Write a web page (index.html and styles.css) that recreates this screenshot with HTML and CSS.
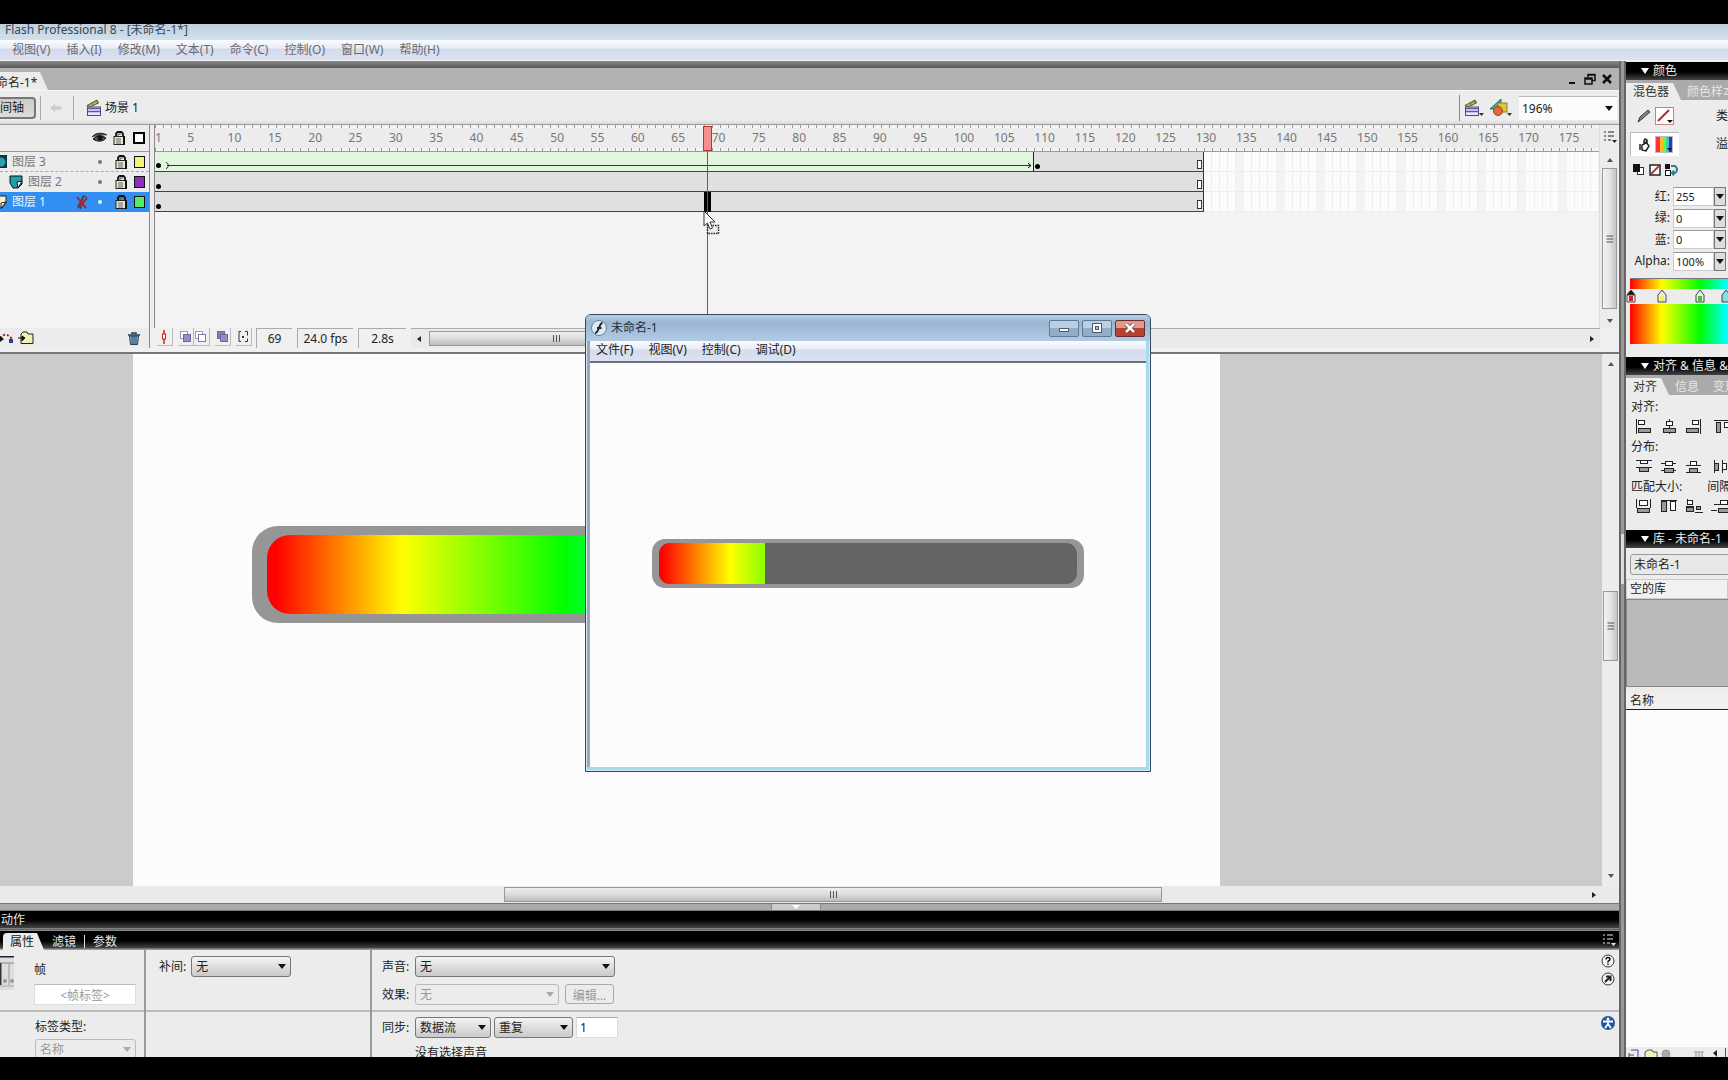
FILE: index.html
```html
<!DOCTYPE html>
<html lang="zh-CN">
<head>
<meta charset="utf-8">
<title>Flash Professional 8 - [未命名-1*]</title>
<link rel="stylesheet" href="styles.css">
</head>
<body>
<svg class="defs" aria-hidden="true">
  <symbol id="lock" viewBox="0 0 12 14"><path d="M3 6V2.500l1.500-1.500h4L10 2.500V6" fill="none" stroke="#111" stroke-width="1.800"/><path d="M5 5V3h3" fill="none" stroke="#555"/><rect x="1" y="5.500" width="9.500" height="8" fill="#e8e8d0" stroke="#222"/><path d="M11 5v9" stroke="#111" stroke-width="2"/><path d="M3 8h5M3 10h5M3 12h5" stroke="#666"/></symbol>
  <symbol id="clapper" viewBox="0 0 16 16"><path d="M1 5.500L11 0l1.500 3L3 7.500z" fill="#9c9c3c" stroke="#5a5a20"/><path d="M4 4.500l2 2M8 2.500l2 2" stroke="#dede8a"/><rect x="1.500" y="7" width="13" height="8.500" fill="#e6e6fa" stroke="#4a4a92"/><path d="M2 8.500h12M2 11.500h12" stroke="#5a5aa4" stroke-width="1.500"/></symbol>
  <symbol id="menu" viewBox="0 0 14 14"><path d="M1 2h2M1 6h2M1 10h2M5 2h6M5 6h6M5 10h3" stroke="currentColor"/><path d="M9 10h5l-2.500 3z" fill="currentColor"/></symbol>
  <symbol id="grip" viewBox="0 0 9 8"><path d="M1.500 0v7M4.500 0v7M7.500 0v7" stroke="#555"/></symbol>
</svg>
<div class="band band-top"></div>
<header>
  <div class="titlebar">Flash Professional 8 - [未命名-1*]</div>
  <nav class="menubar"><a href="#">视图(V)</a><a href="#">插入(I)</a><a href="#">修改(M)</a><a href="#">文本(T)</a><a href="#">命令(C)</a><a href="#">控制(O)</a><a href="#">窗口(W)</a><a href="#">帮助(H)</a></nav>
</header>
<div class="workspace">
  <main class="main">
    <section class="doc">
      <div class="doctabs">
        <a class="doctab" href="#">命名-1*</a>
        <div class="winbtns">
          <button aria-label="最小化"><svg viewBox="0 0 12 12"><path d="M2 10h6" stroke="#111" stroke-width="2"/></svg></button>
          <button aria-label="还原"><svg viewBox="0 0 12 12"><path d="M4 4V1.500h7v6H8.500M1 5h7v6H1zM1 6h7M4 2h7" fill="none" stroke="#111" stroke-width="1.500"/></svg></button>
          <button aria-label="关闭"><svg viewBox="0 0 12 12"><path d="M2 2l8 8M10 2l-8 8" stroke="#111" stroke-width="2.500"/></svg></button>
        </div>
      </div>
      <div class="editbar">
        <button class="tlbtn">间轴</button>
        <i class="sep"></i>
        <button class="back" aria-label="返回"><svg width="14" height="12" viewBox="0 0 16 12"><path d="M1 6l6-5v3h7v4H7v3z" fill="#ccc"/></svg></button>
        <i class="sep"></i>
        <span class="scene"><svg width="16" height="18"><use href="#clapper"/></svg>场景 1</span>
        <div class="edittools">
          <button aria-label="编辑场景"><svg width="20" height="18" viewBox="0 0 20 18"><use href="#clapper" width="16" height="18"/><path d="M15 14h5l-2.500 3z" fill="#333"/></svg></button>
          <button aria-label="编辑元件"><svg width="23" height="18" viewBox="0 0 23 18"><path d="M0 10L11 0v10z" fill="#3fae8c" stroke="#23705a"/><rect x="8" y="4" width="9" height="9" fill="#e0c63c" stroke="#96801e"/><circle cx="8" cy="12" r="4.500" fill="#e2693a" stroke="#a3401c"/><path d="M17 14h5l-2.500 3z" fill="#333"/></svg></button>
          <span class="combo zoom"><select aria-label="缩放"><option>196%</option></select></span>
        </div>
      </div>
      <div class="timeline">
        <div class="layers">
          <div class="lhead">
            <svg width="15" height="11" viewBox="0 0 15 11"><path d="M0 5C3 1 9 0 15 3M1 7c4-4 9-4 13-1-3 4-9 4-13 1z" fill="#555" stroke="#111"/><circle cx="8" cy="6" r="2.500" fill="#111"/></svg>
            <svg class="lk" width="12" height="14"><use href="#lock"/></svg>
            <b class="chip outline"></b>
          </div>
          <div class="layer masked">
            <svg width="12" height="14" viewBox="0 0 12 14"><rect width="7" height="13" fill="#063a42"/><circle cx="1" cy="7" r="4.500" fill="#29a0ac"/></svg>
            <span class="lname">图层 3</span><i class="dot"></i><svg class="lk" width="12" height="14"><use href="#lock"/></svg><b class="chip yellow"></b>
          </div>
          <div class="layer sub">
            <svg width="14" height="14" viewBox="0 0 14 14"><path d="M1 1h12v8l-4 4H4L1 8z" fill="#21a0ac" stroke="#111"/><path d="M13 6l-5 1 1 6z" fill="#fff" stroke="#111"/></svg>
            <span class="lname">图层 2</span><i class="dot"></i><svg class="lk" width="12" height="14"><use href="#lock"/></svg><b class="chip purple"></b>
          </div>
          <div class="layer selected">
            <svg width="12" height="14" viewBox="0 0 12 14"><path d="M0 1h6v7l-4 5H0" fill="#f5f0d4" stroke="#222"/><path d="M6 7L1 8v5z" fill="#fff" stroke="#222"/></svg>
            <span class="lname">图层 1</span>
            <svg class="noedit" width="12" height="14" viewBox="0 0 12 14"><path d="M9 1L3 13" stroke="#3c3c50" stroke-width="4"/><path d="M9 2L4 12" stroke="#c8b070"/><path d="M1 2l9 11M11 3L2 13" stroke="#a3293c" stroke-width="2"/></svg>
            <i class="dot"></i><svg class="lk" width="12" height="14"><use href="#lock"/></svg><b class="chip green"></b>
          </div>
        </div>
        <div class="gutter"></div>
        <div class="frames">
          <div class="ruler" id="ruler"><span>1</span><span>5</span><span>10</span><span>15</span><span>20</span><span>25</span><span>30</span><span>35</span><span>40</span><span>45</span><span>50</span><span>55</span><span>60</span><span>65</span><span>70</span><span>75</span><span>80</span><span>85</span><span>90</span><span>95</span><span>100</span><span>105</span><span>110</span><span>115</span><span>120</span><span>125</span><span>130</span><span>135</span><span>140</span><span>145</span><span>150</span><span>155</span><span>160</span><span>165</span><span>170</span><span>175</span></div>
          <div class="frow tweened">
            <div class="tween"><i class="key"></i><svg width="4" height="7" viewBox="0 0 4 7"><path d="M0 0l3 3.500-3 3.500" fill="none" stroke="#333"/></svg><i class="shaft"></i><svg class="tip" width="4" height="7" viewBox="0 0 4 7"><path d="M0 1l3 2.500-3 2.500" fill="none" stroke="#111"/></svg></div>
            <div class="span"><i class="key"></i><i class="endmark"></i></div><div class="empty"></div>
          </div>
          <div class="frow"><div class="span"><i class="key"></i><i class="endmark"></i></div><div class="empty"></div></div>
          <div class="frow"><div class="span"><i class="key"></i><i class="endmark"></i></div><div class="empty"></div></div>
          <div class="selframe"></div>
          <div class="playhead"></div>
          <svg class="cursor" width="18" height="26" viewBox="0 0 18 26"><rect x="4.500" y="15.500" width="11" height="8" fill="#eee" stroke="#222" stroke-width="1.500" stroke-dasharray="1.500 1"/><path d="M1 1v15l3.500-3 2.500 6 2.500-1-2.500-6h5z" fill="#fff" stroke="#333"/></svg>
        </div>
        <div class="vscroll tlscroll">
          <svg class="menuicon" width="14" height="14"><use href="#menu"/></svg>
          <i class="up"></i><div class="thumb"><svg width="9" height="8"><use href="#grip"/></svg></div><i class="down"></i>
        </div>
      </div>
      <div class="status">
        <div class="layertools">
          <button aria-label="运动引导层"><svg width="14" height="14" viewBox="0 0 14 14"><path d="M0 7q6-7 12 1" fill="none" stroke="#a22" stroke-width="2" stroke-dasharray="2 2"/><path d="M0 5l4 3-4 3z" fill="#111"/><rect x="9" y="8" width="4" height="4" fill="#2b3f9c"/></svg></button>
          <button aria-label="新建文件夹"><svg width="16" height="14" viewBox="0 0 16 14"><path d="M3 12.500V3l2-2h4l1 2h5v9.500z" fill="#f0f0b0" stroke="#222"/><path d="M0 7h6M4 5l3 2-3 3z" fill="#111" stroke="#111"/></svg></button>
          <button class="trash" aria-label="删除图层"><svg width="12" height="13" viewBox="0 0 12 13"><path d="M0 3h12M4 2V1h4v1" fill="none" stroke="#1d405e" stroke-width="1.500"/><path d="M1.500 4h9l-1 8.500h-7zM4 4v8M6 4v8M8 4v8" fill="#9cc0d8" stroke="#1d405e"/></svg></button>
        </div>
        <div class="onion">
          <button aria-label="帧居中"><svg width="14" height="14" viewBox="0 0 14 14"><path d="M7 0v14" stroke="#c22" stroke-width="1.500"/><rect x="5.500" y="4" width="3" height="5" fill="#fff" stroke="#c22"/></svg></button>
          <button class="gapl" aria-label="绘图纸外观"><svg width="14" height="14" viewBox="0 0 14 14"><rect x="2.500" y="1.500" width="7" height="7" fill="#fff" stroke="#9999c0"/><rect x="5.500" y="4.500" width="7" height="7" fill="#8f8fc0" stroke="#6a6a9c"/></svg></button>
          <button aria-label="绘图纸外观轮廓"><svg width="14" height="14" viewBox="0 0 14 14"><rect x="1.500" y="1.500" width="7" height="7" fill="#fff" stroke="#9999c0"/><rect x="4.500" y="4.500" width="7" height="7" fill="#fff" stroke="#7a7aac"/></svg></button>
          <button class="gapl" aria-label="编辑多个帧"><svg width="14" height="14" viewBox="0 0 14 14"><rect x="2.500" y="1.500" width="7" height="7" fill="#8080b4" stroke="#6a6a9c"/><rect x="5.500" y="4.500" width="7" height="7" fill="#8f8fc0" stroke="#6a6a9c"/></svg></button>
          <button class="gapl" aria-label="修改绘图纸标记"><svg width="14" height="14" viewBox="0 0 14 14"><path d="M5 1.500H3v10h2M9 1.500h2.500v4M9 11.500h2.500v-3" fill="none" stroke="#333"/><rect x="6" y="6" width="2" height="2" fill="#333"/></svg></button>
        </div>
        <output class="w36">69</output><output class="w56">24.0 fps</output><output class="w48">2.8s</output>
        <div class="hscroll"><i class="left"></i><div class="thumb"><svg width="9" height="8"><use href="#grip"/></svg></div><i class="right"></i></div>
      </div>
    </section>
    <section class="stagearea">
      <div class="pasteboard"><div class="canvas"><div class="bar"><div class="fill"></div></div></div></div>
      <div class="vscroll stagev"><i class="up"></i><div class="thumb"><svg width="9" height="8"><use href="#grip"/></svg></div><i class="down"></i></div>
      <div class="hscroll stageh"><div class="thumb"><svg width="9" height="8"><use href="#grip"/></svg></div><i class="right"></i></div>
    </section>
    <div class="splitter"><button aria-label="折叠面板"></button></div>
    <div class="panelbar">动作</div>
    <div class="panelbar tabs"><a class="on" href="#">属性</a><a href="#">滤镜</a><i></i><a href="#">参数</a><svg width="14" height="14"><use href="#menu"/></svg></div>
    <section class="props">
      <div class="pcol frameinfo">
        <div class="top">
          <svg class="frameicon" width="14" height="34" viewBox="0 0 14 34"><rect width="14" height="34" fill="#ddd"/><path d="M0 .5h14" stroke="#223" stroke-width="2"/><path d="M0 7h14" stroke="#888"/><path d="M.5 7v22" stroke="#333" stroke-width="2"/><path d="M9 7v22" stroke="#999"/><circle cx="5" cy="25" r="2" fill="#999"/><circle cx="12" cy="25" r="2" fill="#999"/><path d="M0 30h14" stroke="#aaa"/></svg>
          <label for="flabel">帧</label><input id="flabel" value="&lt;帧标签&gt;" disabled>
        </div>
        <div class="bottom"><label for="ltype">标签类型:</label><span class="combo off"><select id="ltype" disabled><option>名称</option></select></span></div>
      </div>
      <div class="pcol tweencol"><div class="top"><label for="tw">补间:</label><span class="combo w100"><select id="tw"><option>无</option></select></span></div><div class="bottom"></div></div>
      <div class="pcol soundcol">
        <div class="top">
          <div class="prow"><label for="snd">声音:</label><span class="combo w200"><select id="snd"><option>无</option></select></span></div>
          <div class="prow"><label for="eff">效果:</label><span class="combo off w144"><select id="eff" disabled><option>无</option></select></span><button class="edit" disabled>编辑...</button></div>
          <div class="help">
            <svg width="14" height="14" viewBox="0 0 14 14"><circle cx="7" cy="7" r="6" fill="#f6f6f6" stroke="#333"/><path d="M5 5.500q0-2 2-2t2 1.800q0 1-2 2V8.500M7 9.500v1.500" fill="none" stroke="#111" stroke-width="1.500"/></svg>
            <svg width="14" height="14" viewBox="0 0 14 14"><circle cx="7" cy="7" r="6" fill="#f6f6f6" stroke="#333"/><path d="M4 10l5-5M5 4.500h4.500V9" fill="none" stroke="#222" stroke-width="2"/></svg>
          </div>
        </div>
        <div class="bottom">
          <div class="prow"><label for="sync">同步:</label><span class="combo w76"><select id="sync"><option>数据流</option></select></span><span class="combo w80"><select aria-label="重复方式"><option>重复</option></select></span><input class="times" aria-label="次数" value="1"></div>
          <div class="nosound">没有选择声音</div>
          <div class="help"><svg width="14" height="14" viewBox="0 0 14 14"><circle cx="7" cy="7" r="7" fill="#1f56a0"/><circle cx="7" cy="3" r="1.500" fill="#fff"/><path d="M2 5.500h10M7 5v3l-3 4M7 8l3 4" fill="none" stroke="#fff" stroke-width="1.800"/></svg></div>
        </div>
      </div>
    </section>
    <section class="player">
      <div class="ptitle">
        <svg width="16" height="16" viewBox="0 0 16 16"><circle cx="8" cy="8" r="7.500" fill="#dfe9f2" stroke="#6b8196"/><path d="M11.500 3C8 3 8 13 4 13M6 8h4.500" fill="none" stroke="#14283c" stroke-width="2"/></svg>
        <span>未命名-1</span>
        <button aria-label="最小化"><svg width="12" height="10" viewBox="0 0 12 10"><rect x="1.500" y="5.500" width="9" height="3" fill="#fff" stroke="#4b5c70"/></svg></button>
        <button aria-label="最大化"><svg width="12" height="10" viewBox="0 0 12 10"><rect x="1.500" y=".5" width="9" height="9" fill="#fff" stroke="#4b5c70"/><rect x="4.500" y="3.500" width="3" height="3" fill="#a9c0da" stroke="#4b5c70"/></svg></button>
        <button class="close" aria-label="关闭"><svg width="12" height="10" viewBox="0 0 12 10"><path d="M2 1l8 8M10 1L2 9" stroke="#6e3434" stroke-width="4"/><path d="M2 1l8 8M10 1L2 9" stroke="#fff" stroke-width="2.500"/></svg></button>
      </div>
      <nav class="pmenu"><a href="#">文件(F)</a><a href="#">视图(V)</a><a href="#">控制(C)</a><a href="#">调试(D)</a></nav>
      <div class="pview"><div class="pbar"><div class="ptrack"><div class="pfill"></div></div></div></div>
    </section>
  </main>
  <div class="divider"><button aria-label="折叠面板"></button></div>
  <aside class="dock">
    <h2>颜色</h2>
    <div class="dtabs"><a class="on" href="#">混色器</a><a href="#">颜色样本</a></div>
    <section class="mixer">
      <div class="mrow"><button class="tool" aria-label="笔触颜色"><svg width="16" height="16" viewBox="0 0 16 16"><path d="M2 14l2-5 8-7 2 2-8 7z" fill="#888" stroke="#333"/></svg></button><button class="sw" aria-label="笔触"><svg width="20" height="18" viewBox="0 0 20 18"><rect x=".5" y=".5" width="18" height="17" fill="#fff" stroke="#d08080"/><path d="M3 14L14 3" stroke="#b02838" stroke-width="2"/><path d="M12 13h6l-3 3z" fill="#111"/></svg></button><span class="mlabel">类型:</span></div>
      <div class="mrow"><span class="active"><button class="tool" aria-label="填充颜色"><svg width="14" height="16" viewBox="0 0 14 16"><path d="M4 8l4-3 3 4-3 5-4-1zM6 8V4l1-2 2 1v3M2 7v6" fill="none" stroke="#222" stroke-width="1.500"/></svg></button><button class="sw rainbow" aria-label="填充"><svg width="16" height="15" viewBox="0 0 16 15"><path d="M11 11h5l-2.500 3z" fill="#111"/></svg></button></span><span class="mlabel">溢出:</span></div>
      <div class="mrow small">
        <svg width="12" height="14" viewBox="0 0 12 14"><rect x="4.500" y="4.500" width="6" height="7" fill="#fff" stroke="#333"/><rect y="1" width="7" height="8" fill="#111"/></svg>
        <svg width="12" height="14" viewBox="0 0 12 14"><rect x="1" y="2" width="10" height="10" fill="#fff" stroke="#222" stroke-width="1.500"/><path d="M2 11l8-8" stroke="#b33" stroke-width="2"/></svg>
        <svg width="14" height="14" viewBox="0 0 14 14"><rect y="1" width="5" height="5" fill="#111"/><rect x=".5" y="7.500" width="5" height="5" fill="#fff" stroke="#111"/><path d="M6 3h4q4 4 0 7H7M9 7.500L7 10l2 2.500" fill="none" stroke="#317a90" stroke-width="2"/></svg>
      </div>
      <div class="num"><label for="r">红:</label><input id="r" value="255"><button aria-label="调整红"></button></div>
      <div class="num"><label for="g">绿:</label><input id="g" value="0"><button aria-label="调整绿"></button></div>
      <div class="num"><label for="b">蓝:</label><input id="b" value="0"><button aria-label="调整蓝"></button></div>
      <div class="num"><label for="a">Alpha:</label><input id="a" value="100%"><button aria-label="调整透明度"></button></div>
      <div class="strip"></div>
      <svg class="stops" width="104" height="16" viewBox="0 0 104 16"><g stroke="#444"><path d="M1 6l4-5 4 5v7H1z" fill="#eee"/><path d="M1 6l4-5 4 5z" fill="#111"/><path d="M3 7h4v5H3z" fill="#c22" stroke="none"/><path d="M32 6l4-5 4 5v7h-8z" fill="#eee"/><path d="M34 7h4v5h-4z" fill="#f0f05a" stroke="none"/><path d="M70 6l4-5 4 5v7h-8z" fill="#eee"/><path d="M72 7h4v5h-4z" fill="#3c3" stroke="none"/><path d="M96 6l4-5 4 5v7h-8z" fill="#7fe0e8"/></g></svg>
      <div class="strip big"></div>
    </section>
    <h2>对齐 &amp; 信息 &amp; 变形</h2>
    <div class="dtabs"><a class="on" href="#">对齐</a><a href="#">信息</a><i></i><a href="#">变形</a></div>
    <section class="align">
      <p>对齐:</p>
      <svg width="100" height="16" viewBox="0 0 100 16" fill="#999" stroke="#222"><path d="M1.500 0v15"/><rect x="3.500" y="1.500" width="6" height="4" fill="#fff"/><rect x="3.500" y="9.500" width="12" height="4"/><path d="M34.500 0v15"/><rect x="31.500" y="2.500" width="6" height="4" fill="#fff"/><rect x="28.500" y="9.500" width="12" height="4"/><path d="M65.500 0v15"/><rect x="57.500" y="1.500" width="6" height="4" fill="#fff"/><rect x="51.500" y="9.500" width="12" height="4"/><path d="M79 1.500h20"/><rect x="81.500" y="3.500" width="4" height="10"/><rect x="89.500" y="3.500" width="4" height="5" fill="#fff"/></svg>
      <p>分布:</p>
      <svg width="100" height="16" viewBox="0 0 100 16" fill="#999" stroke="#222"><path d="M1 1.500h16M1 8.500h16M26 4.500h15M26 11.500h15M51 6.500h15M51 13.500h15M79.500 1v13M87.500 1v13"/><rect x="5.500" y="1.500" width="7" height="3" fill="#fff"/><rect x="4.500" y="8.500" width="9" height="4"/><rect x="30.500" y="2.500" width="7" height="4" fill="#fff"/><rect x="29.500" y="9.500" width="9" height="4"/><rect x="55.500" y="2.500" width="6" height="4" fill="#fff"/><rect x="54.500" y="9.500" width="8" height="4"/><rect x="79.500" y="4.500" width="4" height="7"/><rect x="87.500" y="4.500" width="4" height="6" fill="#fff"/></svg>
      <p class="two"><span>匹配大小:</span><span>间隔:</span></p>
      <svg width="100" height="16" viewBox="0 0 100 16" fill="#999" stroke="#222"><path d="M1.500 0v9M15.500 0v9M26 1.500h16M51 7.500h8M60 13.500h8M52.500 0v6M79 5.500h6M76 11.500h6"/><rect x="4.500" y="1.500" width="8" height="5" fill="#fff"/><rect x="2.500" y="9.500" width="12" height="4"/><rect x="26.500" y="2.500" width="5" height="10"/><rect x="35.500" y="2.500" width="5" height="9" fill="#fff"/><rect x="52.500" y="1.500" width="5" height="4" fill="#fff"/><rect x="51.500" y="8.500" width="7" height="4"/><rect x="61.500" y="7.500" width="4" height="3"/><rect x="85.500" y="1.500" width="7" height="4" fill="#fff"/><rect x="83.500" y="9.500" width="10" height="4"/></svg>
    </section>
    <h2>库 - 未命名-1</h2>
    <section class="library">
      <select aria-label="库文档"><option>未命名-1</option></select>
      <div class="libinfo">空的库</div>
      <div class="preview"></div>
      <div class="libhead">名称</div>
      <div class="liblist"></div>
      <div class="libfoot"><svg width="102" height="10" viewBox="0 0 102 10" fill="none" stroke="#555"><path d="M5 3h7v7M3 8h5M3 6v4" stroke="#449"/><path d="M19 10V5l3-2h4l1 2h4v5" fill="#f3f0bd"/><circle cx="40" cy="7" r="4" fill="#aaa" stroke="#999"/><path d="M68 5h10M70 6v4M73 6v4M76 6v4" stroke="#888"/><path d="M91 3v7l-4-4z" fill="#222" stroke="none"/><path d="M99.500 1v9"/></svg></div>
    </section>
  </aside>
</div>
<div class="band band-bottom"></div>
</body>
</html>
```

FILE: styles.css
```css
* { box-sizing: border-box; }
body {
  margin: 0;
  min-height: 100vh;
  display: flex;
  flex-direction: column;
  background: #000;
  font: 12px/16px "Noto Sans", "Noto Sans CJK SC", sans-serif;
  color: #222;
  overflow-x: hidden;
}
a { color: inherit; text-decoration: none; }
button, input, select { font: inherit; color: inherit; margin: 0; padding: 0; }
button { border: 0; background: none; }
svg { display: block; flex: none; }
p, h2 { margin: 0; }
.defs { position: absolute; width: 0; height: 0; }
.band-top { height: 24px; }
.band-bottom { height: 23px; }

/* Application title and menu */
.titlebar { height: 16px; line-height: 11px; padding-left: 5px; background: linear-gradient(#bdcfdd, #d2e1ed); color: #3c4650; overflow: hidden; }
.menubar { display: flex; gap: 16px; height: 21px; padding: 2px 12px; background: linear-gradient(#fafbfe, #e9edf7 40%, #d3dbec 45%, #dce2f2); border-bottom: 1px solid #f2f2f2; color: #6a6a70; }

.workspace { flex: 1; display: flex; background: #999; }
.main { position: relative; flex: 1; min-width: 0; display: flex; flex-direction: column; background: #ececec; }

/* Document window */
.doc { border-bottom: 2px solid #777; }
.doctabs { display: flex; justify-content: space-between; height: 29px; padding-top: 7px; background: linear-gradient(#8a8a8a, #555 7px, #b2b2b2 7px); }
.doctab { align-self: flex-end; width: 48px; height: 18px; line-height: 21px; text-indent: -4px; background: #ececec; clip-path: polygon(0 0, 40px 0, 48px 100%, 0 100%); overflow: hidden; }
.winbtns { display: flex; align-items: center; gap: 5px; padding-right: 6px; }
.winbtns svg { width: 12px; height: 12px; }
.editbar { display: flex; align-items: center; height: 35px; background: linear-gradient(#ececec 29px, #d2d2d2 34px); border-top: 1px solid #f5f5f5; border-bottom: 1px solid #999; }
.tlbtn { width: 36px; height: 22px; text-align: left; border: 2px solid #777; border-left: 0; border-radius: 0 4px 4px 0; background: linear-gradient(#ccc, #ddd); }
.sep { width: 1px; height: 24px; margin-left: 4px; background: #aaa; }
.back { margin: 0 6px 0 8px; }
.scene { display: flex; align-items: center; gap: 3px; margin-left: 12px; }
.edittools { display: flex; align-items: center; gap: 6px; height: 26px; margin-left: auto; padding: 0 2px 0 4px; border-left: 1px solid #888; }

.combo { position: relative; display: inline-flex; }
.combo::after { content: ""; position: absolute; right: 5px; top: 8px; border: 4px solid transparent; border-top: 5px solid #111; border-bottom: 0; pointer-events: none; }
.combo select { appearance: none; width: 100%; height: 21px; padding-left: 4px; line-height: 17px; border: 1px solid #777; border-radius: 3px; background: linear-gradient(#f4f4f4, #dcdcdc 55%, #cacaca); }
.combo.off { color: #999; }
.combo.off::after { border-top-color: #aaa; }
.combo.off select { color: #999; border-color: #bbb; background: #ececec; opacity: 1; }
.combo.zoom { width: 98px; }
.combo.zoom::after { right: 4px; top: 10px; }
.combo.zoom select { height: 24px; padding-left: 3px; border: 0; border-top: 1px solid #bbb; border-radius: 0; background: #fcfcfc; }

/* Timeline */
.timeline { display: grid; grid-template-columns: 149px 6px 1fr 20px; min-height: 203px; background: #f3f3f3; }
.layers { color: #777; }
.lhead, .layer { display: flex; align-items: center; height: 20px; background: #ececec; padding-right: 4px; }
.lhead { height: 27px; justify-content: flex-end; gap: 6px; padding-bottom: 1px; border-bottom: 1px solid #999; }
.lhead .chip { width: 12px; height: 12px; margin-left: 2px; border: 2px solid #000; background: #fff; }
.masked { border-bottom: 1px dashed #aaa; }
.sub { padding-left: 9px; }
.sub .lname { padding-left: 5px; }
.selected { background: #308ff0; color: #e6f6ff; }
.lname { flex: 1; }
.noedit { margin-right: 10px; }
.dot { width: 4px; height: 4px; border-radius: 50%; background: currentColor; }
.layer .lk { margin: 0 7px 0 13px; }
.chip { width: 11px; height: 12px; border: 1px solid #111; }
.yellow { background: #f3f377; }
.purple { background: #8e30bd; }
.green { background: #55ed66; }
.gutter { border: 1px solid #888; border-width: 0 1px; background: #ececec; }

.frames { position: relative; min-width: 0; }
.ruler {
  display: grid;
  grid-template-columns: 4fr repeat(35, 5fr);
  height: 27px;
  line-height: 25px;
  color: #777;
  border-bottom: 1px solid #999;
  background:
    linear-gradient(transparent 3px, #ececec 3px 23px, transparent 23px),
    repeating-linear-gradient(90deg, #999 0 1px, #f4f4f4 1px calc(100% / 179));
}
.ruler span { width: 0; white-space: nowrap; }
.frow { display: grid; grid-template-columns: 130fr 49fr; height: 20px; }
.frow.tweened { grid-template-columns: 109fr 21fr 49fr; }
.span, .tween { display: flex; align-items: flex-end; justify-content: space-between; padding: 0 1px 2px; background: #e0e0e0; border-bottom: 1px solid #444; }
.span { border-right: 1px solid #333; }
.tween { align-items: center; justify-content: flex-start; padding-top: 10px; background: #e1f5df; border-right: 1px solid #222; }
.key { width: 5px; height: 5px; border-radius: 50%; background: #000; }
.tween svg:first-of-type { margin-left: 5px; }
.shaft { flex: 1; height: 1px; margin: 0 -3px; background: #333; }
.endmark { width: 5px; height: 9px; border: 1px solid #333; background: #fff; }
.empty {
  border-bottom: 1px solid #eee;
  background:
    repeating-linear-gradient(90deg, transparent 0 calc(400% / 49), #f3f3f3 calc(400% / 49) calc(500% / 49)),
    repeating-linear-gradient(90deg, #fcfcfc 0 calc(100% / 49 - 1px), #f0f0f0 calc(100% / 49 - 1px) calc(100% / 49));
}
.playhead { position: absolute; left: calc(6790% / 179); top: 1px; width: 9px; height: 25px; background: #f78f8f; border: 1px solid #b33; }
.playhead::after { content: ""; position: absolute; left: 3px; top: 24px; width: 1px; height: 177px; background: #b83a48; }
.selframe { position: absolute; left: calc(6800% / 179); top: 67px; width: 7px; height: 20px; background: #000; }
.cursor { position: absolute; left: calc(6790% / 179); top: 85px; }

/* Scroll bars */
.vscroll { display: flex; flex-direction: column; align-items: center; background: #ececec; }
.vscroll .thumb, .hscroll .thumb { display: flex; align-items: center; justify-content: center; border: 1px solid #999; }
.vscroll .thumb { width: 15px; background: linear-gradient(90deg, #f4f4f4, #e4e4e4 50%, #c4c4c4); }
.vscroll .thumb svg { transform: rotate(90deg); }
.hscroll { display: flex; align-items: center; background: #eaeaea; }
.hscroll .thumb { height: 15px; background: linear-gradient(#eee, #dcdcdc 50%, #bcbcbc); }
.up, .down, .left, .right { border: 3px solid transparent; flex: none; }
.up { border-bottom: 4px solid #555; border-top: 0; }
.down { border-top: 4px solid #555; border-bottom: 0; }
.left { border-right: 4px solid #222; border-left: 0; }
.right { border-left: 4px solid #222; border-right: 0; }
.tlscroll { padding-top: 5px; gap: 6px; border-left: 1px solid #ddd; }
.tlscroll .up { margin-top: 8px; }
.tlscroll .thumb { height: 141px; }
.tlscroll .down { margin-top: 4px; }

.status { display: flex; height: 24px; padding-bottom: 4px; background: #f0f0f0; }
.layertools { display: flex; align-items: center; gap: 4px; width: 150px; padding-right: 9px; border-right: 1px solid #888; background: #ececec; }
.trash { margin-left: auto; }
.onion { display: flex; padding-left: 7px; }
.onion button { display: flex; align-items: center; width: 16px; height: 18px; border: 1px solid #bbb; border-width: 0 1px 1px 0; }
.gapl { margin-left: 5px; }
.status output { margin-left: 5px; text-align: center; line-height: 19px; border: 1px solid #aaa; border-width: 1px 0 0 1px; }
.status .w36 { width: 36px; margin-left: 4px; }
.w56 { width: 56px; }
.w48 { width: 48px; }
.status .hscroll { flex: 1; margin: 0 19px 0 5px; padding: 0 6px; border-top: 1px solid #aaa; gap: 8px; }
.status .thumb { flex: 0 0 255px; }
.status .hscroll .right { margin-left: auto; }

/* Stage */
.stagearea { flex: 1; display: grid; grid-template: 1fr 17px / 1fr 17px; }
.pasteboard { padding: 0 382px 0 133px; background: #cbcbcb; }
.canvas { height: 100%; padding: 172px 119px 0; background: #fcfcfc; }
.bar { height: 97px; padding: 9px 14px 9px 15px; border-radius: 26px; background: #969696; }
.fill { height: 79px; border-radius: 23px; background: linear-gradient(90deg, #f00 1%, #ff0 16.500%, #0f0 36.500%, #0ff 50%, #00f 67%, #f0f 83%, #f00); }
.stagev { padding: 8px 0; }
.stagev .thumb { height: 70px; margin-top: 225px; }
.stagev .down { margin-top: auto; }
.stageh { grid-column: 1 / -1; padding: 0 23px 0 0; justify-content: space-between; }
.stageh .thumb { width: 658px; margin-left: 504px; }

.splitter { display: flex; justify-content: center; height: 8px; padding-right: 28px; background: #aaa; border: 1px solid #777; border-width: 1px 0; }
.splitter button { position: relative; width: 50px; background: #ccc; border: 1px solid #888; border-width: 0 1px; }
.splitter button::after { content: ""; position: absolute; left: 20px; top: 1px; border: 4px solid transparent; border-top-color: #fff; border-bottom: 0; }
.panelbar { height: 20px; padding-left: 1px; line-height: 17px; color: #e8e8e8; background: linear-gradient(#000 9px, #444 17px, #aaa 17px, #555 18px, #999 20px); }
.panelbar.tabs { display: flex; height: 19px; padding: 2px 3px 0 3px; background: linear-gradient(#000 10px, #444 17px, #999 18px); }
.tabs a { padding: 0 8px; }
.tabs a.on { width: 41px; padding: 0 7px; color: #222; background: #ececec; border-radius: 4px 0 0; clip-path: polygon(0 0, 34px 0, 41px 100%, 0 100%); }
.tabs i { width: 1px; height: 13px; margin-top: 2px; background: #ddd; }
.tabs svg { margin: 0 0 0 auto; }

/* Property inspector */
.props { display: flex; height: 107px; overflow: hidden; }
.pcol { display: flex; flex-direction: column; }
.top { position: relative; flex: none; height: 62px; padding-top: 6px; border-bottom: 2px solid #bbb; }
.bottom { position: relative; flex: 1; padding-top: 5px; }
.frameinfo { width: 144px; }
.frameinfo .top { display: grid; grid-template: 28px 22px / 34px 102px; }
.frameicon { grid-row: 1 / 3; }
.frameinfo label { line-height: 28px; }
.frameinfo input { height: 21px; border: 1px solid #ddd; border-top-color: #bbb; background: #fff; text-align: center; color: #999; }
.frameinfo .bottom { display: flex; flex-direction: column; gap: 4px; padding: 7px 8px 0 35px; }
.frameinfo .bottom label { line-height: 16px; }
.frameinfo .combo { flex: none; }
.tweencol { width: 226px; border-left: 2px solid #999; }
.tweencol .top { display: flex; gap: 5px; padding-left: 13px; line-height: 21px; }
.soundcol { flex: 1; border-left: 2px solid #999; }
.soundcol .top { display: flex; flex-direction: column; gap: 7px; padding-left: 10px; }
.soundcol .bottom { padding-left: 10px; }
.prow { display: flex; gap: 3px; line-height: 21px; }
.prow label { width: 30px; }
.w100 { width: 100px; }
.w200 { width: 200px; }
.w144 { width: 144px; }
.w76 { width: 76px; }
.w80 { width: 79px; }
.edit { width: 49px; height: 20px; margin-left: 3px; border: 1px solid #aaa; border-radius: 3px; color: #999; }
.times { width: 42px; height: 21px; padding-left: 3px; border: 1px solid #ddd; border-top-color: #aaa; background: #fff; }
.nosound { padding: 7px 0 0 33px; }
.help { position: absolute; right: 4px; top: 4px; display: flex; flex-direction: column; gap: 4px; }

/* Floating player window */
.player { position: absolute; left: 585px; top: 253px; width: 566px; height: 458px; display: flex; flex-direction: column; padding: 0 4px 4px; border: 1px solid #35495c; border-radius: 6px 6px 0 0; background: linear-gradient(#a5dcec, #a5dcec) 0 100% / 100% 4px no-repeat, linear-gradient(90deg, #98a9ba 50%, #a5dcec 50%); box-shadow: inset 0 0 0 1px #d5e8f4; }
.ptitle { display: flex; align-items: center; gap: 3px; height: 26px; margin: 0 -4px; padding: 0 5px; border-radius: 5px 5px 0 0; background: linear-gradient(#b9cfe6, #99b5d3 30%, #b2cbe4); color: #1d2b3c; }
.ptitle span { flex: 1; padding-left: 1px; }
.ptitle button { display: flex; justify-content: center; align-items: center; width: 30px; height: 17px; border: 1px solid #5f7890; border-radius: 2px; background: linear-gradient(#bccfe3 50%, #93acc8 50%); }
.ptitle .close { background: linear-gradient(#da9c90 50%, #b8402c 50%); border-color: #6c2c2c; }
.pmenu { display: flex; gap: 15px; height: 20px; padding: 1px 6px; background: linear-gradient(#fafbfe, #e9edf7 40%, #d3dbec 45%, #dce2f2); }
.pview { flex: 1; display: flex; align-items: center; padding: 0 62px 53px; background: #fcfcfc; border-top: 2px solid #6b727c; }
.pbar { flex: 1; margin-top: 50px; padding: 4px 7px; border-radius: 13px; background: #969696; }
.ptrack { height: 41px; border-radius: 11px; background: #646464; overflow: hidden; }
.pfill { width: 106px; height: 41px; background: linear-gradient(90deg, #f00 3px, #ff0 71px, #8cff00); }

/* Right dock */
.divider { display: flex; align-items: center; width: 7px; border: 1px solid #666; border-width: 0 2px; background: #999; }
.divider button { width: 3px; height: 50px; background: #ddd; }
.dock { display: flex; flex-direction: column; width: 102px; background: #ececec; overflow: hidden; white-space: nowrap; padding-top: 1px; }
.dock h2 { position: relative; height: 18px; padding-left: 27px; font-size: 12px; font-weight: 400; line-height: 17px; color: #eee; background: linear-gradient(#000 10px, #444); }
.dock h2::before { content: ""; position: absolute; left: 15px; top: 6px; border: 4px solid transparent; border-top: 6px solid #fff; border-bottom: 0; }
.dtabs { display: flex; height: 20px; padding-top: 3px; background: #aaa; color: #e6e6e6; line-height: 17px; }
.dtabs a { padding: 0 8px 0 6px; }
.dtabs a.on { padding: 0 12px 0 7px; color: #333; background: #ececec; clip-path: polygon(0 0, calc(100% - 8px) 0, 100% 100%, 0 100%); }
.dtabs i { width: 1px; height: 14px; background: #ccc; }
.mixer { height: 257px; padding: 5px 0 0 4px; }
.mrow { display: flex; align-items: center; height: 22px; padding-left: 6px; }
.mrow:nth-child(2) { height: 24px; margin-top: 5px; padding-left: 0; }
.active { display: flex; align-items: center; width: 49px; height: 24px; padding-left: 7px; border: 1px solid #bbb; border-width: 1px 0 0 1px; background: #fff; }
.sw { margin-left: 3px; }
.rainbow { width: 18px; height: 17px; border: 1px solid #bbb; background: linear-gradient(90deg, #f33 4px, #fb2 4px 7px, #6f3 7px 10px, #3cc 10px 13px, #33c 13px); }
.mlabel { width: 12px; margin-left: auto; }
.small { height: 28px; padding-left: 3px; gap: 4px; }
.num { display: flex; align-items: center; height: 22px; }
.num:nth-of-type(4), .num:nth-of-type(6) { height: 21px; }
.num label { width: 40px; margin-right: 3px; text-align: right; }
.num input { width: 41px; height: 19px; padding-left: 2px; border: 1px solid #ccc; border-top-color: #999; background: #fff; font-size: 11px; }
.num button { position: relative; width: 12px; height: 19px; border: 1px solid #777; background: #ddd; }
.num button::after { content: ""; position: absolute; left: 1px; top: 6px; border: 4px solid transparent; border-top: 5px solid #111; border-bottom: 0; }
.num:has(#r) { margin-top: 2px; }
.strip { height: 11px; margin-top: 6px; background: linear-gradient(90deg, #f00, #ff0 32px, #0f0 70px, #0ff 97px); border-top: 1px solid #777; }
.stops { margin-left: -4px; }
.strip.big { height: 40px; margin-top: -1px; border: 0; }
.align { height: 135px; padding: 4px 0 0 5px; }
.align p { height: 16px; line-height: 16px; }
.align svg { margin: 4px 0 4px 4px; }
.two { display: flex; gap: 25px; }
.two span:first-child { width: 54px; }
.library { flex: 1; display: flex; flex-direction: column; }
.library select { appearance: none; flex: none; width: 110px; height: 21px; margin: 6px 0 4px 4px; padding-left: 3px; border: 1px solid #999; border-radius: 3px; background: #e8e8e8; }
.libinfo { height: 20px; padding-left: 3px; line-height: 17px; background: #f1f1f1; border: 1px solid #ccc; }
.preview { height: 88px; background: #b9b9b9; border: 1px solid #888; border-right: 0; }
.libhead { height: 17px; margin-top: 6px; padding-left: 4px; border-bottom: 1px solid #222; background: #f0f0f0; }
.liblist { flex: 1; background: #fcfcfc; }
.libfoot { height: 10px; background: #ececec; }
```
